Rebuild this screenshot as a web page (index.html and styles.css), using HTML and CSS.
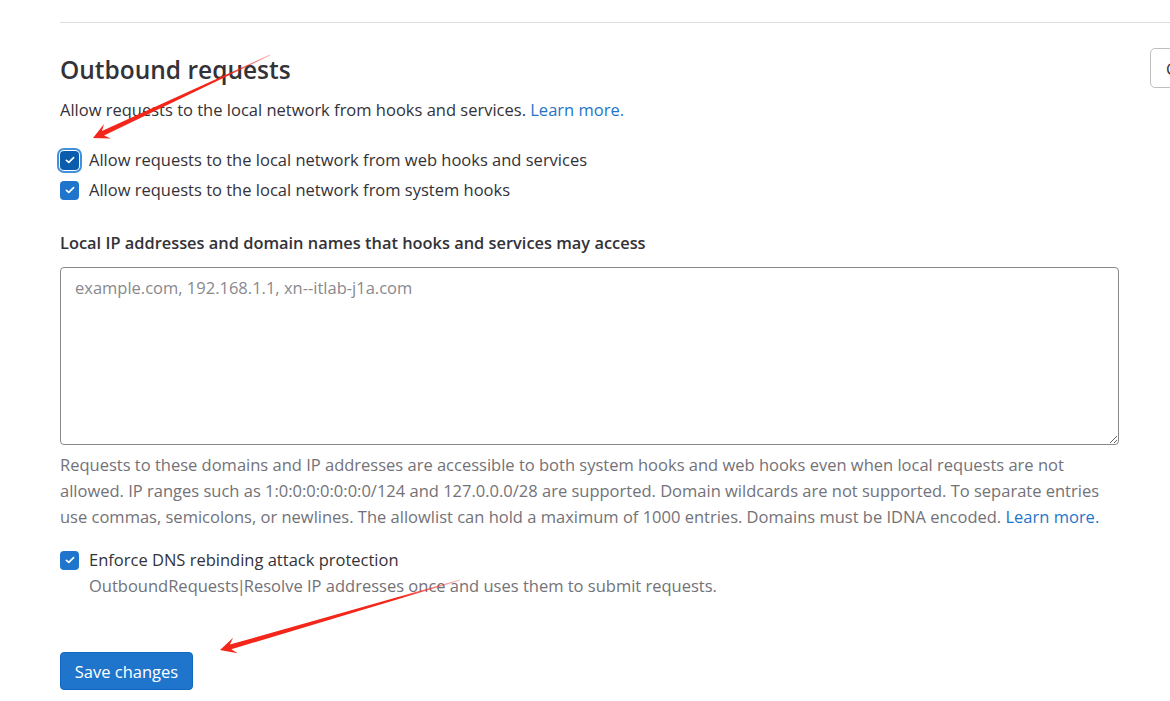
FILE: index.html
```html
<!DOCTYPE html>
<html lang="en">
<head>
<meta charset="utf-8">
<title>Outbound requests</title>
<link rel="stylesheet" href="styles.css">
</head>
<body>
<div class="page">
  <div class="divider"></div>
  <section class="settings">
    <div class="settings-header">
      <h4 class="settings-title">Outbound requests</h4>
      <button class="btn-collapse" type="button">Collapse</button>
    </div>
    <p class="settings-desc">Allow requests to the local network from hooks and services. <a class="link" href="#">Learn more.</a></p>

    <form class="settings-form">
      <div class="checks">
        <label class="check-row">
          <span class="checkbox checkbox-focus"><svg viewBox="0 0 16 16" width="12" height="12"><path d="M3.2 8.4 L6.4 11.2 L12.8 4.8" fill="none" stroke="#fff" stroke-width="2.2" stroke-linecap="round" stroke-linejoin="round"/></svg></span>
          <span class="check-label">Allow requests to the local network from web hooks and services</span>
        </label>
        <label class="check-row">
          <span class="checkbox"><svg viewBox="0 0 16 16" width="12" height="12"><path d="M3.2 8.4 L6.4 11.2 L12.8 4.8" fill="none" stroke="#fff" stroke-width="2.2" stroke-linecap="round" stroke-linejoin="round"/></svg></span>
          <span class="check-label">Allow requests to the local network from system hooks</span>
        </label>
      </div>

      <label class="field-label" for="allowlist">Local IP addresses and domain names that hooks and services may access</label>
      <textarea id="allowlist" class="textarea" placeholder="example.com, 192.168.1.1, xn--itlab-j1a.com"></textarea>
      <p class="help">Requests to these domains and IP addresses are accessible to both system hooks and web hooks even when local requests are not allowed. IP ranges such as 1:0:0:0:0:0:0:0/124 and 127.0.0.0/28 are supported. Domain wildcards are not supported. To separate entries use commas, semicolons, or newlines. The allowlist can hold a maximum of 1000 entries. Domains must be IDNA encoded. <a class="link" href="#">Learn more.</a></p>

      <div class="check-block">
        <label class="check-row check-row-dns">
          <span class="checkbox"><svg viewBox="0 0 16 16" width="12" height="12"><path d="M3.2 8.4 L6.4 11.2 L12.8 4.8" fill="none" stroke="#fff" stroke-width="2.2" stroke-linecap="round" stroke-linejoin="round"/></svg></span>
          <span class="check-label">Enforce DNS rebinding attack protection</span>
        </label>
        <p class="check-help">OutboundRequests<span class="pipe">|</span>Resolve IP addresses once and uses them to submit requests.</p>
      </div>

      <button class="btn-save" type="button">Save changes</button>
    </form>
  </section>
</div>

<svg class="annotations" width="1170" height="701" viewBox="0 0 1170 701">
  <defs>
    <linearGradient id="fade1" gradientUnits="userSpaceOnUse" x1="93" y1="138" x2="270" y2="55">
      <stop offset="0" stop-color="#f4261b"/>
      <stop offset="0.75" stop-color="#f4261b"/>
      <stop offset="1" stop-color="#f4261b" stop-opacity="0.3"/>
    </linearGradient>
    <linearGradient id="fade2" gradientUnits="userSpaceOnUse" x1="220" y1="650" x2="460" y2="580">
      <stop offset="0" stop-color="#f4261b"/>
      <stop offset="0.75" stop-color="#f4261b"/>
      <stop offset="1" stop-color="#f4261b" stop-opacity="0.3"/>
    </linearGradient>
  </defs>
  <polygon fill="url(#fade1)" points="93,138 110.9,138.4 104.0,135.6 270.2,55.4 269.8,54.6 101.9,131.1 104.1,124.0"/>
  <polygon fill="url(#fade2)" points="220,650 237.6,653.2 231.3,649.3 460.1,580.4 459.9,579.6 229.9,644.5 233.1,637.8"/>
</svg>
</body>
</html>
```
FILE: styles.css
```css
html, body {
  margin: 0;
  padding: 0;
  background: #fff;
}
body {
  width: 1170px;
  height: 701px;
  overflow: hidden;
  position: relative;
  font-family: "Open Sans", "Noto Sans", "DejaVu Sans", sans-serif;
  font-size: 16.5px;
  color: #333238;
}
.page {
  padding-left: 60px;
}
.divider {
  height: 1px;
  background: #dcdcde;
  margin-top: 22px;
}
.settings-header {
  display: flex;
  justify-content: space-between;
  align-items: flex-start;
  padding-top: 25px;
  margin-right: -70px;
}
.settings-title {
  margin: 6px 0 0 0;
  font-size: 24.5px;
  line-height: 32px;
  font-weight: 600;
  color: #333238;
}
.btn-collapse {
  width: 90px;
  height: 40px;
  border: 1px solid #bfbfc3;
  border-radius: 5px;
  background: #fff;
  font-family: inherit;
  font-size: 16.5px;
  color: #333238;
  text-align: left;
  padding: 0 0 0 15px;
}
.settings-desc {
  margin: 10px 0 0 0;
  line-height: 24px;
}
.link {
  color: #1f75cb;
  text-decoration: none;
}
.settings-form {
  width: 1059px;
}
.checks {
  margin-top: 23px;
  display: flex;
  flex-direction: column;
}
.check-row {
  display: flex;
  align-items: center;
  gap: 10px;
  height: 30px;
}
.checkbox {
  width: 19px;
  height: 19px;
  border-radius: 4px;
  background: #1f75cb;
  display: flex;
  align-items: center;
  justify-content: center;
  flex: none;
  box-sizing: border-box;
}
.checkbox-focus {
  background: #0b5cad;
  box-shadow: 0 0 0 1px #fff, 0 0 0 3px #428fdc;
}
.check-label {
  line-height: 24px;
}
.field-label {
  display: block;
  margin-top: 26px;
  font-size: 16.4px;
  font-weight: 600;
  line-height: 24px;
}
.textarea {
  display: block;
  box-sizing: border-box;
  width: 1059px;
  height: 178px;
  margin-top: 12px;
  padding: 8px 14px;
  border: 1px solid #89888d;
  border-radius: 4px;
  font-family: inherit;
  font-size: 16.5px;
  line-height: 24px;
  color: #333238;
  resize: vertical;
}
.textarea::placeholder {
  color: #89888d;
}
.help {
  margin: 7px 0 0 0;
  line-height: 26px;
  color: #737278;
}
.check-block {
  margin-top: 17px;
}
.check-row-dns {
  height: 26px;
}
.check-help {
  margin: 0 0 0 29px;
  line-height: 26px;
  color: #737278;
}
.pipe {
  margin: 0 -2px;
}
.btn-save {
  display: block;
  margin-top: 53px;
  width: 133px;
  height: 38px;
  border: 1px solid #1068bf;
  border-radius: 4px;
  background: #1f75cb;
  color: #fff;
  font-family: inherit;
  font-size: 16.5px;
  padding: 0;
}
.annotations {
  position: absolute;
  left: 0;
  top: 0;
  pointer-events: none;
}
```
